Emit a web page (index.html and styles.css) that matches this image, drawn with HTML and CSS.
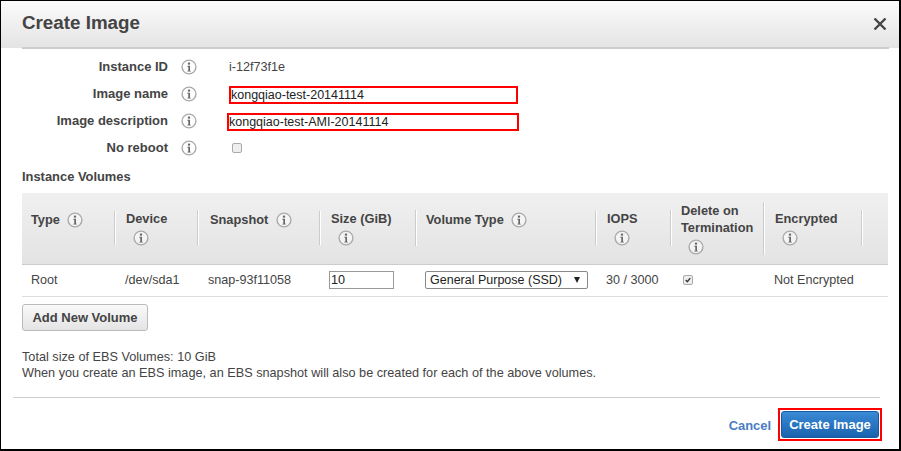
FILE: index.html
```html
<!DOCTYPE html>
<html lang="en">
<head>
<meta charset="utf-8">
<title>Create Image</title>
<link rel="stylesheet" href="styles.css">
</head>
<body>
<svg class="sprite" width="0" height="0" aria-hidden="true">
  <symbol id="info" viewBox="0 0 16 16">
    <circle cx="8" cy="8" r="6.9" fill="#fff" fill-opacity=".5" stroke="#a9a9a9" stroke-width="1.4"/>
    <rect x="6.9" y="3.6" width="2.2" height="2" fill="#666"/>
    <path d="M6.4 6.8h2.6v4.9h.8v.9H6.4v-.9h.9V7.7h-.9z" fill="#666"/>
  </symbol>
</svg>
<main class="dialog">
  <header class="head">
    <h1 class="title">Create Image</h1>
    <svg class="close" viewBox="0 0 14 14" aria-label="Close"><path d="M1.5 1.5l11 11M12.5 1.5l-11 11" stroke="#444" stroke-width="2.4" fill="none"/></svg>
  </header>
  <section class="form">
    <div class="row"><span class="label">Instance ID</span><svg class="info"><use href="#info"/></svg><span class="value">i-12f73f1e</span></div>
    <div class="row"><span class="label">Image name</span><svg class="info"><use href="#info"/></svg><span class="field name">kongqiao-test-20141114</span></div>
    <div class="row"><span class="label">Image description</span><svg class="info"><use href="#info"/></svg><span class="field desc">kongqiao-test-AMI-20141114</span></div>
    <div class="row"><span class="label">No reboot</span><svg class="info"><use href="#info"/></svg><span class="check"></span></div>
  </section>
  <h2 class="subhead">Instance Volumes</h2>
  <table class="volumes">
    <colgroup><col class="c1"><col class="c2"><col class="c3"><col class="c4"><col class="c5"><col class="c6"><col class="c7"><col class="c8"><col class="c9"></colgroup>
    <thead>
      <tr>
        <th><div class="th">Type <svg class="info sm"><use href="#info"/></svg></div></th>
        <th><div class="th">Device<br><svg class="info sm ind"><use href="#info"/></svg></div></th>
        <th><div class="th">Snapshot <svg class="info sm"><use href="#info"/></svg></div></th>
        <th><div class="th">Size (GiB)<br><svg class="info sm ind"><use href="#info"/></svg></div></th>
        <th><div class="th">Volume Type <svg class="info sm"><use href="#info"/></svg></div></th>
        <th><div class="th">IOPS<br><svg class="info sm ind"><use href="#info"/></svg></div></th>
        <th><div class="th">Delete on<br>Termination<br><svg class="info sm ind"><use href="#info"/></svg></div></th>
        <th><div class="th">Encrypted<br><svg class="info sm ind"><use href="#info"/></svg></div></th>
        <th><div class="th empty"></div></th>
      </tr>
    </thead>
    <tbody>
      <tr>
        <td>Root</td>
        <td>/dev/sda1</td>
        <td>snap-93f11058</td>
        <td><span class="size">10</span></td>
        <td><span class="select">General Purpose (SSD)<span class="arrow"></span></span></td>
        <td>30 / 3000</td>
        <td><span class="check on"><svg viewBox="0 0 10 10"><path d="M2.2 5l2 2.2L7.8 2.6" stroke="#333" stroke-width="1.7" fill="none"/></svg></span></td>
        <td>Not Encrypted</td>
        <td></td>
      </tr>
    </tbody>
  </table>
  <button class="add" type="button">Add New Volume</button>
  <p class="note">Total size of EBS Volumes: 10 GiB<br>When you create an EBS image, an EBS snapshot will also be created for each of the above volumes.</p>
  <hr class="rule">
  <footer class="foot">
    <a class="cancel" href="#">Cancel</a>
    <span class="highlight"><button class="primary" type="button">Create Image</button></span>
  </footer>
</main>
</body>
</html>
```
FILE: styles.css
```css
* { box-sizing: border-box; }
html, body { margin: 0; padding: 0; background: #fff; }
body { width: 901px; height: 451px; overflow: hidden; font-family: "Liberation Sans", Arial, sans-serif; font-size: 12.6px; color: #444; }
.sprite { display: block; height: 0; }
.dialog { width: 901px; height: 451px; border: solid #000; border-width: 1px 2px 2px 1px; background: #fff; overflow: hidden; }
.head { height: 47px; background: linear-gradient(#fbfbfb, #e4e4e4); display: flex; align-items: center; justify-content: space-between; padding: 0 12px 0 21px; position: relative; }
.head::after { content: ""; position: absolute; left: 21px; right: 10px; bottom: -1px; height: 2px; background: #ccc; }
.title { margin: 0; font-size: 18.8px; font-weight: bold; color: #444; position: relative; top: -2px; }
.close { width: 14px; height: 14px; position: relative; top: -1px; }
.form { padding-top: 5px; }
.row { height: 27px; display: flex; align-items: center; }
.label { width: 167px; text-align: right; font-weight: bold; font-size: 13px; color: #444; margin-top: -1px; }
.info { width: 16px; height: 16px; flex: none; margin-left: 13px; }
.info.sm { margin: 0 0 0 4px; vertical-align: -4px; }
.info.ind { margin-left: 7px; margin-top: 3px; }
.value { margin-left: 32px; }
.field { display: block; height: 18px; margin-top: 2px; border: 2px solid #f00; background: #fff; color: #222; font-size: 12.5px; line-height: 14px; }
.field.name { width: 289px; margin-left: 32px; }
.field.desc { width: 292px; margin-left: 30px; }
.check { display: inline-block; width: 10px; height: 10px; margin-left: 35px; border: 1px solid #aaa; border-radius: 2px; background: #eee; }
.subhead { margin: 9px 0 0 21px; font-size: 12.9px; font-weight: bold; line-height: 14px; color: #444; height: 23px; }
.volumes { margin: 0 0 0 21px; width: 866px; border-collapse: collapse; table-layout: fixed; }
.c1 { width: 94px; } .c2 { width: 83px; } .c3 { width: 122px; } .c4 { width: 96px; } .c5 { width: 180px; } .c6 { width: 75px; } .c7 { width: 93px; } .c8 { width: 98px; } .c9 { width: 25px; }
thead th { height: 71px; padding: 0; background: linear-gradient(#f0f0f0, #e3e3e3); border-bottom: 1px solid #ccc; text-align: left; font-size: 12.8px; line-height: 17px; color: #444; }
.th { min-height: 34px; padding-left: 9px; display: block; border-right: 1px solid #fff; box-shadow: inset -2px 0 0 -1px #ccc; }
th:nth-child(2) .th, th:nth-child(4) .th, th:nth-child(6) .th, th:nth-child(8) .th { padding-left: 10px; }
th:nth-child(3) .th { padding-left: 11px; }
.th.empty { border: 0; box-shadow: none; }
tbody td { height: 32px; padding: 0 0 0 9px; border-bottom: 1px solid #ddd; color: #444; white-space: nowrap; }
tbody td:nth-child(4), tbody td:nth-child(5) { padding-left: 8px; }
tbody td:nth-child(7) { padding-left: 11px; }
.check.on { padding: 0; margin-left: 0; vertical-align: -1px; }
.check.on svg { display: block; width: 8px; height: 8px; }
.size { display: block; width: 65px; height: 18px; border: 1px solid #999; color: #222; line-height: 17px; padding-left: 1px; }
.select { display: flex; align-items: center; justify-content: space-between; width: 163px; height: 18px; border: 1px solid #888; border-radius: 2px; padding: 0 7px 0 4px; color: #222; background: #fff; font-size: 12.5px; }
.arrow { width: 0; height: 0; border: 3.5px solid transparent; border-top: 6px solid #222; border-bottom: 0; }
.add { display: block; margin: 7px 0 0 21px; width: 126px; height: 27px; padding: 0; border: 1px solid #bbb; border-radius: 3px; background: linear-gradient(#fafafa, #e4e4e4); font: bold 13px "Liberation Sans", Arial, sans-serif; color: #444; }
.note { margin: 18px 0 0 21px; font-size: 12.7px; line-height: 16px; color: #444; }
.rule { margin: 16px 0 0 12px; width: 867px; height: 1px; border: 0; background: #ccc; }
.foot { display: flex; justify-content: flex-end; align-items: center; margin-top: 10px; padding-right: 17px; }
.cancel { color: #4a7dc4; font-weight: bold; font-size: 12.9px; text-decoration: none; margin-right: 7px; margin-top: 3px; }
.highlight { display: block; border: 2px solid #f00; padding: 1px; width: 104px; height: 33px; }
.primary { display: block; width: 100%; height: 100%; padding: 0; border: 1px solid #1a5a9e; border-radius: 3px; background: linear-gradient(#3a8ad6, #1a62ae); color: #fff; font: bold 13px "Liberation Sans", Arial, sans-serif; }
```
